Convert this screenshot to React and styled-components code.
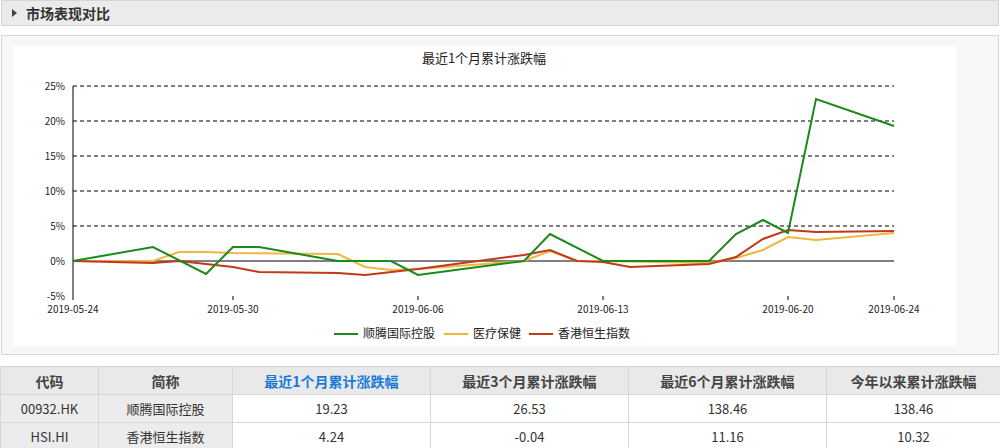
import React from "react";
import styled, { createGlobalStyle } from "styled-components";

const Global = createGlobalStyle`
  body { margin: 0; background: #fff; font-family: "SimSun", "Noto Sans CJK SC", sans-serif; }
`;

const Page = styled.div`
  width: 1000px;
  height: 448px;
  overflow: hidden;
  background: #fff;
`;

const TitleBar = styled.div`
  height: 24px;
  margin: 0 1px;
  border: 1px solid #d6d6d6;
  background: #ebebeb;
  display: flex;
  align-items: center;
  gap: 9px;
  padding-left: 10px;
  font-size: 14px;
  font-weight: bold;
  color: #333;
`;

const Arrow = styled.span`
  width: 0;
  height: 0;
  border-top: 4px solid transparent;
  border-bottom: 4px solid transparent;
  border-left: 5px solid #444;
`;

const ChartPanel = styled.div`
  margin: 9px 1px 0;
  height: 320px;
  border: 1px solid #d6d6d6;
  background: #f7f7f7;
  padding: 10px 0 0 11px;
  box-sizing: border-box;
`;

const Table = styled.table`
  margin-top: 11px;
  width: 1000px;
  border-collapse: collapse;
  font-size: 13px;
  table-layout: fixed;
`;

const Th = styled.th`
  height: 25px;
  border: 1px solid #d6d6d6;
  background: #e9e9e9;
  color: ${(p) => (p.$active ? "#1a7ad6" : "#444")};
  font-size: 14px;
`;

const Td = styled.td`
  height: 25px;
  border: 1px solid #d6d6d6;
  text-align: center;
  color: #333;
  background: ${(p) => (p.$gray ? "#ececec" : "#fff")};
`;

const green = [[72,262],[152,248],[205,275],[232,248],[258,248],[337,262],[390,262],[417,276],[523,262],[549,235],[602,262],[708,262],[735,235],[762,221],[787,234],[815,100],[893,127]];
const orange = [[72,262],[152,262],[178,253],[205,253],[232,254],[337,255],[364,268],[390,271],[417,270],[523,262],[549,252],[576,262],[602,262],[708,264],[735,259],[762,251],[787,238],[815,241],[893,234]];
const red = [[72,262],[152,264],[178,262],[232,268],[258,273],[337,274],[364,276],[417,270],[523,256],[549,251],[576,262],[602,263],[629,268],[708,265],[735,258],[762,240],[787,231],[815,233],[893,232]];

const pts = (a) => a.map((p) => p.join(",")).join(" ");
const ticks = [["25%",87],["20%",122],["15%",157],["10%",192],["5%",227],["0%",262],["-5%",297]];
const dates = [["2019-05-24",72],["2019-05-30",232],["2019-06-06",417],["2019-06-13",602],["2019-06-20",787],["2019-06-24",893]];
const legend = [["顺腾国际控股","#1a8a1a",333],["医疗保健","#f0b640",443],["香港恒生指数","#c0391b",528]];

function Chart() {
  return (
    <svg width="943" height="300" viewBox="12 47 943 300" style={{ display: "block", background: "#fff" }}>
      <g fontFamily="'Noto Sans CJK SC', sans-serif" fontSize="10" fill="#222">
        <text x="483" y="64" textAnchor="middle" fontSize="13">最近1个月累计涨跌幅</text>
        {ticks.map(([t, y]) => (
          <g key={t}>
            <text x="64" y={y + 4} textAnchor="end">{t}</text>
            {t !== "0%" && t !== "-5%" && (
              <line x1="72" x2="893" y1={y} y2={y} stroke="#000" strokeDasharray="4,3" />
            )}
          </g>
        ))}
        <line x1="72" x2="893" y1="262" y2="262" stroke="#000" />
        <line x1="72" x2="72" y1="87" y2="297" stroke="#000" />
        {dates.map(([d, x]) => (
          <g key={d}>
            <line x1={x} x2={x} y1="297" y2="301" stroke="#000" />
            <text x={x} y="314" textAnchor="middle">{d}</text>
          </g>
        ))}
        <polyline points={pts(orange)} fill="none" stroke="#f0b640" strokeWidth="2" />
        <polyline points={pts(red)} fill="none" stroke="#c0391b" strokeWidth="2" />
        <polyline points={pts(green)} fill="none" stroke="#1a8a1a" strokeWidth="2" />
        {legend.map(([n, c, x]) => (
          <g key={n}>
            <line x1={x} x2={x + 24} y1="335" y2="335" stroke={c} strokeWidth="2" />
            <text x={x + 29} y="339" fontSize="12">{n}</text>
          </g>
        ))}
      </g>
    </svg>
  );
}

const rows = [
  ["00932.HK", "顺腾国际控股", "19.23", "26.53", "138.46", "138.46"],
  ["HSI.HI", "香港恒生指数", "4.24", "-0.04", "11.16", "10.32"],
];
const heads = ["代码", "简称", "最近1个月累计涨跌幅", "最近3个月累计涨跌幅", "最近6个月累计涨跌幅", "今年以来累计涨跌幅"];
const widths = [98, 134, 198, 198, 198, 174];

export default function App() {
  return (
    <Page>
      <Global />
      <TitleBar><Arrow />市场表现对比</TitleBar>
      <ChartPanel><Chart /></ChartPanel>
      <Table>
        <colgroup>{widths.map((w, i) => <col key={i} style={{ width: w }} />)}</colgroup>
        <thead>
          <tr>{heads.map((h, i) => <Th key={h} $active={i === 2}>{h}</Th>)}</tr>
        </thead>
        <tbody>
          {rows.map((r) => (
            <tr key={r[0]}>{r.map((c, i) => <Td key={i} $gray={i < 2}>{c}</Td>)}</tr>
          ))}
        </tbody>
      </Table>
    </Page>
  );
}
